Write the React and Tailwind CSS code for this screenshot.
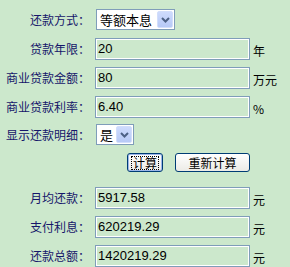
import React from "react";

const label = "w-[90px] shrink-0 text-right text-[12px] leading-[14px] text-[#16166a]";
const cjk = { fontFamily: '"SimSun","Noto Sans CJK SC",sans-serif' };

function Chevron() {
    return (
        <svg width="9" height="6" viewBox="0 0 9 6">
            <path d="M1 1 L4.5 4.5 L8 1" fill="none" stroke="#4d6185" strokeWidth="2" />
        </svg>
    );
}

function FakeSelect({ value, width }) {
    return (
        <div className={`flex h-[21px] ${width} border border-[#7f9db9] bg-white p-px`}>
            <div className="flex min-w-0 flex-1 items-center overflow-hidden whitespace-nowrap pl-[2px] text-[13px] leading-[15px] text-black">{value}</div>
            <div className="flex w-[16px] shrink-0 items-center justify-center rounded-[2px] border border-[#d2defb] bg-gradient-to-b from-[#cedbfd] to-[#b7c9f6]">
                <Chevron />
            </div>
        </div>
    );
}

function Field({ text, value, unit }) {
    return (
        <div className="flex h-[29px] items-start">
            <div className="flex h-[22px] items-center">
                <span className={label}>{text}</span>
            </div>
            <div className="ml-[5px] flex h-[22px] w-[155px] items-center border border-[#7f9db9] bg-[#cce8cc] pl-[2px] text-[13px] text-black shadow-[inset_0_0_0_1px_#ffffff]" style={{ fontFamily: '"Liberation Sans",Arial,sans-serif' }}>
                {value}
            </div>
            {unit && <span className="ml-[3px] mt-[6px] whitespace-nowrap text-[12px] leading-[14px] text-black">{unit}</span>}
        </div>
    );
}

export default function App() {
    return (
        <div className="h-[267px] w-[290px] overflow-hidden bg-[#cce8cc] pt-[9px]" style={cjk}>
            <div className="flex h-[29px] items-start">
                <div className="flex h-[21px] items-center">
                    <span className={label}>还款方式：</span>
                </div>
                <div className="ml-[6px]">
                    <FakeSelect value="等额本息" width="w-[79px]" />
                </div>
            </div>
            <Field text="贷款年限：" value="20" unit="年" />
            <Field text="商业贷款金额：" value="80" unit="万元" />
            <div className="h-[28px]">
                <Field text="商业贷款利率：" value="6.40" unit="%" />
            </div>
            <div className="flex h-[29px] items-start">
                <div className="flex h-[21px] items-center">
                    <span className={label}>显示还款明细：</span>
                </div>
                <div className="ml-[6px]">
                    <FakeSelect value="是" width="w-[38px]" />
                </div>
            </div>
            <div className="flex h-[34px] items-start gap-[12px] pl-[127px]">
                <button className="flex h-[19px] w-[36px] items-center justify-center rounded-[3px] border border-[#003c74] bg-gradient-to-b from-white to-[#ecebe6] p-px text-[12px] text-black shadow-[inset_0_0_0_1px_#9cb6ea]">
                    <span className="px-px leading-[12px] outline-1 outline-dotted outline-black">计算</span>
                </button>
                <button className="flex h-[19px] w-[75px] items-center justify-center rounded-[3px] border border-[#003c74] bg-gradient-to-b from-white to-[#ecebe6] text-[12px] text-black">
                    重新计算
                </button>
            </div>
            <Field text="月均还款：" value="5917.58" unit="元" />
            <Field text="支付利息：" value="620219.29" unit="元" />
            <Field text="还款总额：" value="1420219.29" unit="元" />
        </div>
    );
}
